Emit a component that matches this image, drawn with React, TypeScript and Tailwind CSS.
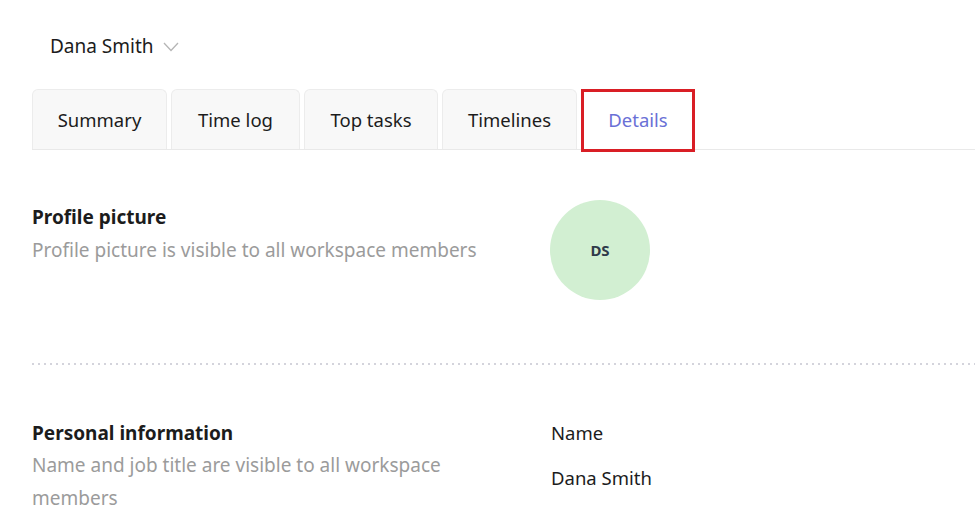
import React from 'react';

const tabs = [
  { label: 'Summary', w: 'w-[135px]' },
  { label: 'Time log', w: 'w-[129px]' },
  { label: 'Top tasks', w: 'w-[134px]' },
  { label: 'Timelines', w: 'w-[135px]' },
];

function Chevron() {
  return (
    <svg width="16" height="10" viewBox="0 0 16 10" fill="none" className="ml-[9px] mt-[1px]">
      <path d="M1 1l7 7.5L15 1" stroke="#b5b5b5" strokeWidth="1.3" />
    </svg>
  );
}

export default function App() {
  return (
    <div className="h-[530px] w-[975px] overflow-hidden bg-white font-['Noto_Sans',sans-serif] text-[#1c1c1c]">
      {/* member picker */}
      <div className="flex items-center pl-[50px] pt-[33px] text-[19px] leading-[26px]">
        <span>Dana Smith</span>
        <Chevron />
      </div>

      {/* tab strip */}
      <div className="ml-[32px] mt-[31px] flex h-[60px] items-end gap-[4px] border-b border-[#e9e9e9]">
        {tabs.map((t) => (
          <div
            key={t.label}
            className={`flex h-[60px] ${t.w} items-center justify-center rounded-t-[6px] border border-b-0 border-[#ececec] bg-[#f8f8f8] text-[18.5px]`}
          >
            {t.label}
          </div>
        ))}
        <div className="relative -mb-[3px] flex h-[63px] w-[114px] items-center justify-center border-[3px] border-[#d91e25] bg-white pb-[2px] text-[18.5px] text-[#6a70d6]">
          Details
        </div>
      </div>

      {/* profile picture */}
      <div className="ml-[32px] mt-[50px] flex">
        <div className="w-[518px] pt-[5px]">
          <div className="text-[19px] font-bold leading-[24px]">Profile picture</div>
          <div className="mt-[9px] text-[19px] leading-[24px] text-[#9b9b9b]">
            Profile picture is visible to all workspace members
          </div>
        </div>
        <div className="flex h-[100px] w-[100px] items-center justify-center rounded-full bg-[#d2efd2] text-[15px] font-bold text-[#2f3a4a]">
          DS
        </div>
      </div>

      {/* section divider */}
      <div className="ml-[32px] mt-[63px] h-[2px] bg-[linear-gradient(to_right,#d4d4dc_2px,transparent_2px)] bg-[length:6px_2px]" />

      {/* personal information */}
      <div className="ml-[32px] mt-[56px] flex">
        <div className="w-[440px]">
          <div className="text-[19px] font-bold leading-[24px]">Personal information</div>
          <div className="mt-[4px] text-[19px] leading-[33px] text-[#9b9b9b]">
            Name and job title are visible to all workspace members
          </div>
        </div>
        <div className="ml-[79px] text-[18.5px] leading-[24px]">
          <div>Name</div>
          <div className="mt-[21px]">Dana Smith</div>
        </div>
      </div>
    </div>
  );
}
